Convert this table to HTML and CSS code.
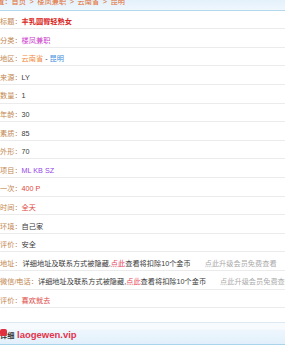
FILE: index.html
```html
<!DOCTYPE html>
<html lang="zh-CN">
<head>
<meta charset="utf-8">
<title>详情</title>
<link rel="stylesheet" href="styles.css">
</head>
<body>
<div class="crumb"><div class="crumb-text">位置：首页<span class="sep">&gt;</span>楼凤兼职<span class="sep">&gt;</span>云南省<span class="sep">&gt;</span>昆明</div></div>
<div class="info">
  <div class="row"><span class="lbl">标题：</span><span class="v-title">丰乳圆臀轻熟女</span></div>
  <div class="row"><span class="lbl">分类：</span><span class="v-cat">楼凤兼职</span></div>
  <div class="row"><span class="lbl">地区：</span><span class="v-prov">云南省</span><span class="val"> - </span><span class="v-city">昆明</span></div>
  <div class="row"><span class="lbl">来源：</span><span class="val">LY</span></div>
  <div class="row"><span class="lbl">数量：</span><span class="val">1</span></div>
  <div class="row"><span class="lbl">年龄：</span><span class="val">30</span></div>
  <div class="row"><span class="lbl">素质：</span><span class="val">85</span></div>
  <div class="row"><span class="lbl">外形：</span><span class="val">70</span></div>
  <div class="row"><span class="lbl">项目：</span><span class="v-item">ML KB SZ</span></div>
  <div class="row"><span class="lbl">一次：</span><span class="v-red">400 P</span></div>
  <div class="row"><span class="lbl">时间：</span><span class="v-red">全天</span></div>
  <div class="row"><span class="lbl">环境：</span><span class="val">自己家</span></div>
  <div class="row"><span class="lbl">评价：</span><span class="val">安全</span></div>
  <div class="row"><span class="lbl">地址：</span><span class="val sp">详细地址及联系方式被隐藏,<span class="v-link">点此</span>查看将扣除10个金币</span><span class="upgrade">点此升级会员免费查看</span></div>
  <div class="row"><span class="lbl">微信/电话：</span><span class="val">详细地址及联系方式被隐藏,<span class="v-link">点此</span>查看将扣除10个金币</span><span class="upgrade">点此升级会员免费查看</span></div>
  <div class="row"><span class="lbl">评价：</span><span class="v-red">喜欢就去</span></div>
</div>
<div class="detail-head">
  <span class="head-text">详细</span>
  <span class="blob"></span>
  <span class="mark">laogewen.vip</span>
</div>
</body>
</html>
```
FILE: styles.css
```css
html, body {
  margin: 0;
  padding: 0;
  background: #fff;
  overflow: hidden;
}
body {
  width: 285px;
  height: 350px;
  font-family: "Liberation Sans", "Noto Sans CJK SC", sans-serif;
  font-size: 7.2px;
  color: #3a3a3a;
}
.crumb {
  height: 9.7px;
  border-bottom: 1px solid #b3d9ee;
  background: linear-gradient(to bottom, #e4f1fb, #f0f7fd);
  overflow: hidden;
}
.crumb-text {
  margin-left: -10px;
  margin-top: -4px;
  line-height: 12px;
  color: #e36b2c;
  white-space: nowrap;
}
.sep {
  margin: 0 3.6px;
  color: #d9692f;
}
.row {
  box-sizing: border-box;
  height: 18.6px;
  padding-top: 4.3px;
  line-height: 13.3px;
  border-bottom: 1px solid #ebebeb;
  white-space: nowrap;
  overflow: hidden;
}
.lbl { color: #bf8752; }
.val { color: #3a3a3a; }
.sp { margin-left: 1px; }
.v-title { color: #d9261c; font-weight: bold; }
.v-cat { color: #cc3ccc; }
.v-prov { color: #ef8a3c; }
.v-city { color: #3d8fde; }
.v-item { color: #9446e6; }
.v-red { color: #e0463e; }
.v-link { color: #e4455c; }
.upgrade {
  margin-left: 14px;
  color: #ababab;
}
.detail-head {
  position: relative;
  margin-top: 13.7px;
  box-sizing: border-box;
  height: 23px;
  padding-top: 6px;
  line-height: 14px;
  border-top: 1px solid #dde9f2;
  border-bottom: 1px solid #a9d4ea;
  background: linear-gradient(to bottom, #f8fbfe 0, #f8fbfe 6px, #eef6fd 7px, #e2f0fb 100%);
  font-weight: bold;
  color: #333;
}
.blob {
  position: absolute;
  left: 0;
  top: 6px;
  width: 7px;
  height: 7px;
  border-radius: 2px;
  background: #e0303f;
}
.mark {
  position: absolute;
  left: 17px;
  top: 6px;
  font-family: "Liberation Sans", sans-serif;
  font-size: 9.5px;
  line-height: 12px;
  font-weight: bold;
  color: #e2344c;
}
```
